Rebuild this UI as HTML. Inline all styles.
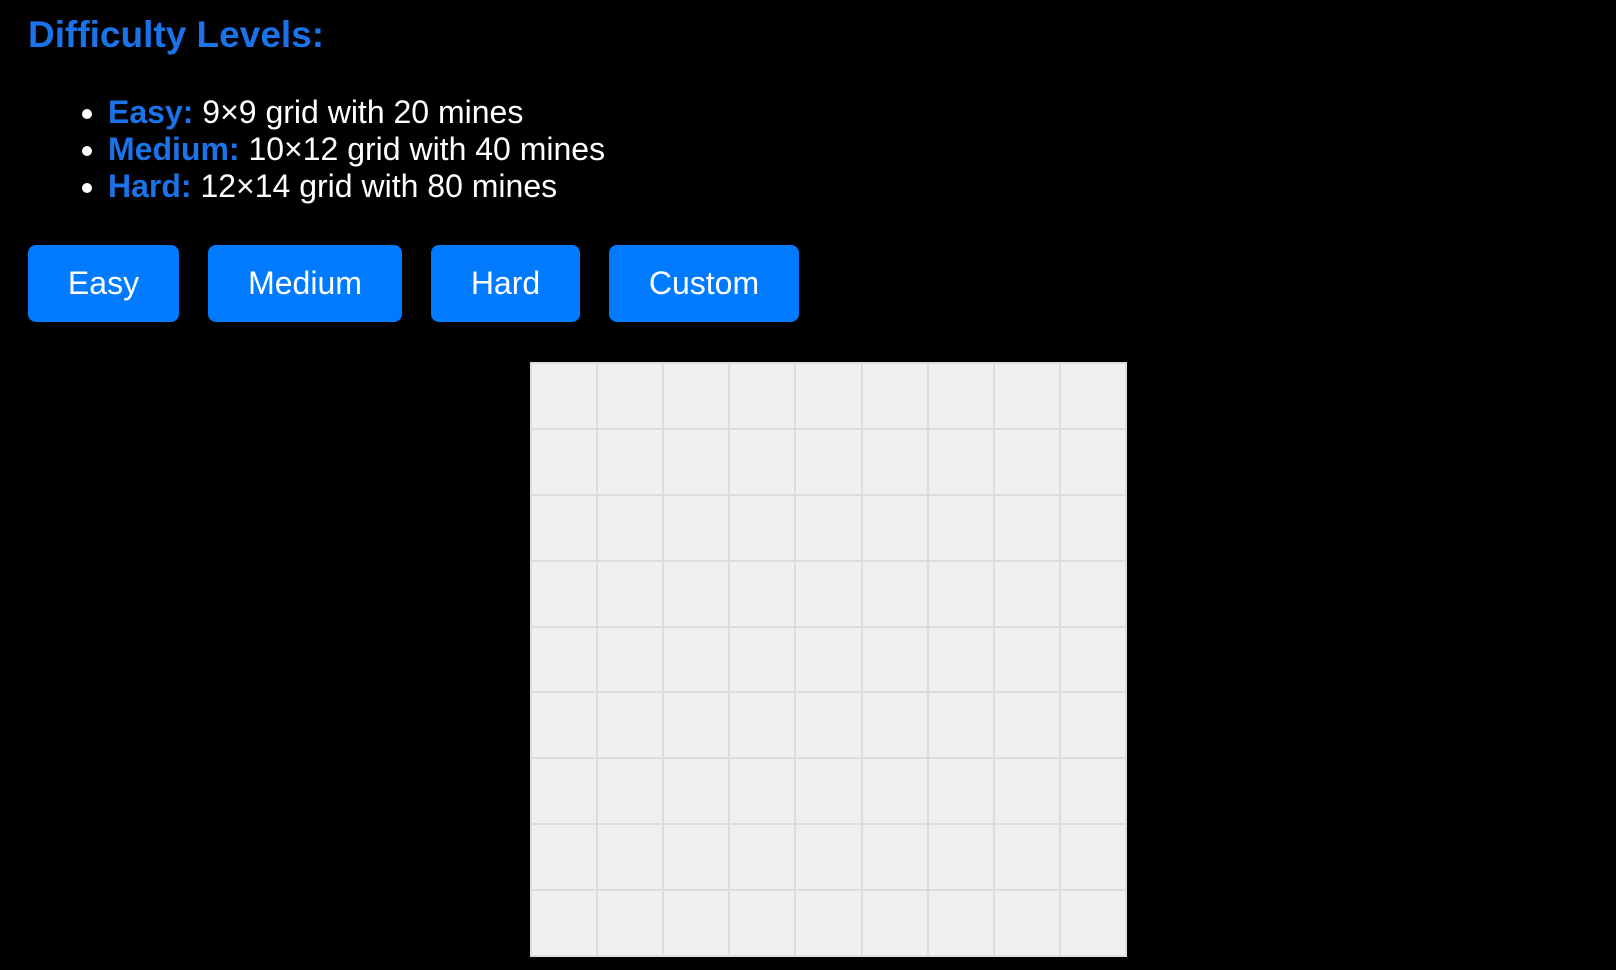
<!DOCTYPE html>
<html><head><meta charset="utf-8"><style>
html,body{margin:0;padding:0;background:#000;width:1616px;height:970px;overflow:hidden;font-family:"Liberation Sans",Arial,sans-serif;color:#fff}
h2{position:absolute;left:28px;top:12px;margin:0;font-size:37px;font-weight:bold;color:#1a73e8;line-height:46px}
ul{position:absolute;left:80px;top:94px;margin:0;padding:0 0 0 28px;font-size:32px;line-height:37px}
ul b{color:#1a73e8}
.btn{position:absolute;top:245px;height:77px;background:#007bff;color:#fff;border-radius:8px;font-size:32px;display:flex;align-items:center;justify-content:center}
.grid{position:absolute;left:530px;top:362px;width:595px;height:593px;border:1px solid #ddd;display:grid;grid-template-columns:repeat(9,1fr);grid-template-rows:repeat(9,1fr);background:#f0f0f0}
.grid div{border:1px solid #ddd;background:#f0f0f0}
</style></head><body>
<h2>Difficulty Levels:</h2>
<ul>
<li><b>Easy:</b> 9×9 grid with 20 mines</li>
<li><b>Medium:</b> 10×12 grid with 40 mines</li>
<li><b>Hard:</b> 12×14 grid with 80 mines</li>
</ul>
<div class="btn" style="left:28px;width:151px">Easy</div>
<div class="btn" style="left:208px;width:194px">Medium</div>
<div class="btn" style="left:431px;width:149px">Hard</div>
<div class="btn" style="left:609px;width:190px">Custom</div>
<div class="grid">
<div></div><div></div><div></div><div></div><div></div><div></div><div></div><div></div><div></div>
<div></div><div></div><div></div><div></div><div></div><div></div><div></div><div></div><div></div>
<div></div><div></div><div></div><div></div><div></div><div></div><div></div><div></div><div></div>
<div></div><div></div><div></div><div></div><div></div><div></div><div></div><div></div><div></div>
<div></div><div></div><div></div><div></div><div></div><div></div><div></div><div></div><div></div>
<div></div><div></div><div></div><div></div><div></div><div></div><div></div><div></div><div></div>
<div></div><div></div><div></div><div></div><div></div><div></div><div></div><div></div><div></div>
<div></div><div></div><div></div><div></div><div></div><div></div><div></div><div></div><div></div>
<div></div><div></div><div></div><div></div><div></div><div></div><div></div><div></div><div></div>
</div>
</body></html>
